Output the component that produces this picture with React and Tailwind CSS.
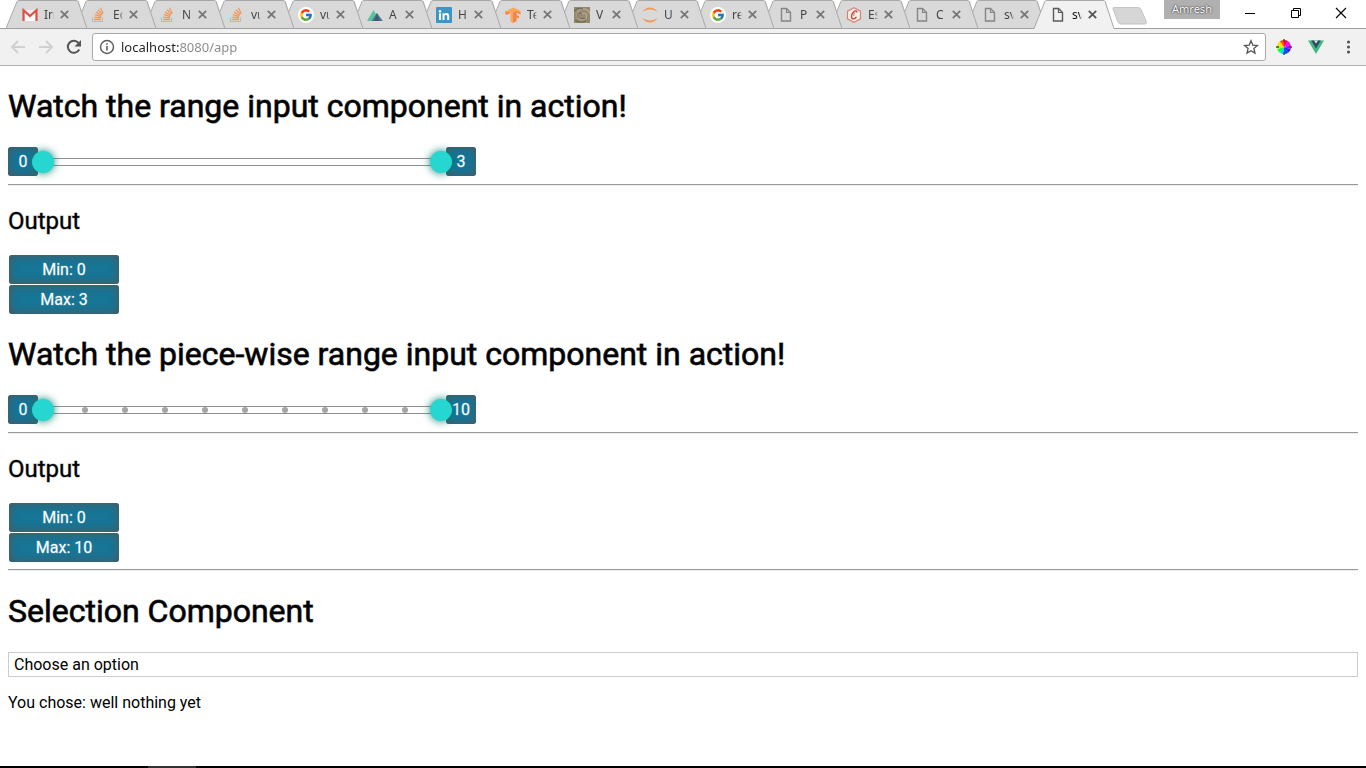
import { useState } from "react";
import { FcGoogle } from "react-icons/fc";

function GmailIcon() {
  return (
    <svg viewBox="0 0 16 16" className="size-4">
      <path d="M1 3h14v11H1z" fill="#ececec" />
      <path d="M3 4l5 4.500 5-4.500v10H3z" fill="#fafafa" />
      <path d="M1.500 14V3.200L8 9l6.500-5.800V14" fill="none" stroke="#db5348" strokeWidth="2.200" />
    </svg>
  );
}

function StackIcon() {
  return (
    <svg viewBox="0 0 16 16" className="size-4" fill="none">
      <path d="M1.500 10.500V14.500h10v-4" stroke="#b9bcbf" strokeWidth="1.200" />
      <path
        d="M3.200 12.500h6.700M3.300 10.200l6.700.7M3.800 7.700l6.500 1.800M5 5.100l5.700 3.200M7 2.700l4.500 4.700M9.500 1l2.700 5.500"
        stroke="#f0995a"
        strokeWidth="1.300"
      />
    </svg>
  );
}

function GoogleIcon() {
  return (
    <span className="flex size-4 items-center justify-center rounded-full bg-white">
      <FcGoogle size={14} />
    </span>
  );
}

function NuxtIcon() {
  return (
    <svg viewBox="0 0 16 16" className="size-4">
      <path d="M0 14L6.500 3 13 14z" fill="#5cc49c" />
      <path d="M4.500 14L10 6l5.800 8z" fill="#4a7a8a" />
      <path d="M7 14l3-8 2.500 8z" fill="#46587a" />
    </svg>
  );
}

function LinkedinIcon() {
  return (
    <svg viewBox="0 0 16 16" className="size-4">
      <rect width="16" height="16" rx="1" fill="#3a96c8" />
      <circle cx="4" cy="4.200" r="1.300" fill="#fff" />
      <path d="M3 6.200h2V13H3zM6.500 6.200h2v1c1-1.700 4.700-1.600 4.700 1.600V13h-2V9.500c0-2.100-2.700-2-2.700 0V13h-2z" fill="#fff" />
    </svg>
  );
}

function TensorIcon() {
  return (
    <svg viewBox="0 0 16 16" className="size-4">
      <path d="M0 4.500L8.500.5l7 3.200v3.500l-4-2v2.500l2.500 1.500v2.300l-2.500-1V14L8 16l-2.500-1.500V6L1 8z" fill="#fba75a" />
      <path d="M8 5.500l3.500-1.500 4 1.500v2l-4-2v3l2.500 1v1.800l-2.500-1V14L8 16z" fill="#f58350" />
      <path d="M0 4.500L5.500 6 1 8z" fill="#f58350" />
    </svg>
  );
}

function SwirlIcon() {
  return (
    <svg viewBox="0 0 16 16" className="size-4" fill="none">
      <rect width="16" height="16" fill="#94896f" />
      <path d="M8 8c0-3 5-2.500 4.500 1.500S5 14 3.500 10 5 2 9 2s6 2 7 5" stroke="#b5a893" strokeWidth="1.500" />
      <path d="M8 8c-1-3-5-2-4.500.5S8 12.500 11 11M0 4c3-3 6-3 9-2M1 13c3 3 9 3 13 0" stroke="#6c6f4e" strokeWidth="1.200" />
      <path d="M6 8c1-2 4-1 3 1s-4 2-5-1 2-5 5-5M11 16l4-5" stroke="#b08a86" strokeWidth="1" />
    </svg>
  );
}

function JupyterIcon() {
  return (
    <svg viewBox="0 0 16 16" className="size-4" fill="#f39a58">
      <path d="M.5 5C3.500-1 12.500-1 15.500 5 11.500 1.700 4.500 1.700.5 5zM.5 11C3.500 17 12.500 17 15.500 11 11.500 14.300 4.500 14.300.5 11z" />
    </svg>
  );
}

function HexIcon() {
  return (
    <svg viewBox="0 0 16 16" className="size-4" fill="none">
      <path d="M8 .7l6.500 3.500v7.600L8 15.300 1.500 11.800V4.200z" fill="#f8eee2" stroke="#d4847c" strokeWidth="1.200" />
      <path d="M10.800 5.500c.6-2-2-2-3.500-.3C5 7.500 4.800 11.500 7 11.800c1.500.1 2.700-.8 3.500-2" stroke="#b9473f" strokeWidth="1.300" />
      <path d="M8.700 5.500c-.8 1-1 2.500-.8 3.500" stroke="#b9473f" strokeWidth=".8" />
    </svg>
  );
}

function PageIcon({ active }) {
  return (
    <svg viewBox="0 0 16 16" className={active ? "size-4 text-[#5a5a5a]" : "size-4 text-[#858585]"} fill="none" stroke="currentColor">
      <path d="M3.500 1.500h5l4 4v8.500h-9z" strokeWidth="1.400" />
      <path d="M8.500 1.500v4h4" strokeWidth="1.200" />
    </svg>
  );
}

const tabs = [
  { title: "In", Icon: GmailIcon },
  { title: "Ec", Icon: StackIcon },
  { title: "N", Icon: StackIcon },
  { title: "vu", Icon: StackIcon },
  { title: "vu", Icon: GoogleIcon },
  { title: "A", Icon: NuxtIcon },
  { title: "H", Icon: LinkedinIcon },
  { title: "Te", Icon: TensorIcon },
  { title: "V", Icon: SwirlIcon },
  { title: "U", Icon: JupyterIcon },
  { title: "re", Icon: GoogleIcon },
  { title: "P", Icon: PageIcon },
  { title: "Es", Icon: HexIcon },
  { title: "C", Icon: PageIcon },
  { title: "sv", Icon: PageIcon },
  { title: "sv", Icon: PageIcon, active: true },
];

function Tab({ title, Icon, active, order, wide }) {
  return (
    <div
      role="tab"
      aria-selected={Boolean(active)}
      className={`relative flex h-[29px] items-center pl-4 ${wide ? "w-[69px]" : "w-[68px]"}`}
      style={{ zIndex: order }}
    >
      <svg
        viewBox="0 0 81 29"
        preserveAspectRatio="none"
        className="absolute top-0 left-0 h-[29px] w-[calc(100%+12px)]"
      >
        <path d="M0 29L11 1.500Q11.500.5 13 .5H71Q72.500.5 73 1.500L81 28.500V29z" fill={active ? "#f1f1f1" : "#d9d9d9"} />
        <path d="M0 28.500L11 1.500Q11.500.5 13 .5H70Q71.500.5 72 1.500L81 28.500" fill="none" stroke="#a8a8a8" />
        {!active && <path d="M0 28.500H81" stroke="#a0a0a0" />}
      </svg>
      <span className="relative shrink-0">
        <Icon active={active} />
      </span>
      <span
        className={`relative ml-[6px] w-[10px] shrink-0 overflow-hidden text-xs whitespace-nowrap mask-r-from-70% ${active ? "text-[#111]" : "text-[#444]"}`}
      >
        {title}
      </span>
      <button aria-label={`Close ${title}`} className="relative ml-[6px] shrink-0">
        <svg viewBox="0 0 9 9" className="size-[9px]">
          <path d="M.8.8l7.400 7.400M8.200.8L.8 8.200" stroke={active ? "#555" : "#777"} strokeWidth="1.800" />
        </svg>
      </button>
    </div>
  );
}

function TabStrip() {
  return (
    <header className="flex h-[29px] bg-white bg-[linear-gradient(#a0a0a0,#a0a0a0)] bg-[length:100%_1px] bg-bottom bg-no-repeat pl-[6px]">
      <div role="tablist" className="isolate flex min-w-0 flex-1">
        {tabs.map((tab, i) => (
          <Tab key={i} {...tab} wide={i < 8} order={tab.active ? 50 : 30 - i} />
        ))}
      </div>
      <div className="flex w-[262px] shrink-0 items-start pl-[8px]">
        <button aria-label="New tab" className="mt-[7px]">
          <svg viewBox="0 0 35 18" className="h-[18px] w-[35px]">
            <path d="M2 .5h24q2 0 3 2L34.500 15q0 2-1.500 2H9q-2 0-3-2L1 2Q.5.5 2 .5z" fill="#d6d6d6" stroke="#c4c4c4" />
          </svg>
        </button>
        <span className="ml-[17px] h-[19px] w-14 bg-[#b0b0b0] text-center text-[11px] leading-[18px] text-white [text-shadow:0_0_2px_#333,0_0_1px_#333]">
          Amresh
        </span>
        <div className="flex flex-1 items-center justify-between pt-[7px] pr-[19px] pl-6">
          <button aria-label="Minimize">
            <svg viewBox="0 0 12 12" className="size-3">
              <path d="M1 6.500h10" stroke="#000" />
            </svg>
          </button>
          <button aria-label="Restore">
            <svg viewBox="0 0 12 12" className="size-3" fill="none" stroke="#000">
              <path d="M1.500 3.500h7v7h-7zM3.500 3.500v-2h7v7h-2" />
            </svg>
          </button>
          <button aria-label="Close window">
            <svg viewBox="0 0 12 12" className="size-3">
              <path d="M1 1l10 10M11 1L1 11" stroke="#000" strokeWidth="1.100" />
            </svg>
          </button>
        </div>
      </div>
    </header>
  );
}

const wheel = ["#f05", "#f0f", "#b0f", "#22f", "#04f", "#0df", "#0f4", "#bf0", "#fd0", "#f50"];

function wedge(i) {
  const a = ((i * 36 - 90) * Math.PI) / 180;
  const b = (((i + 1) * 36 - 90) * Math.PI) / 180;
  return `M8 8L${8 + 7 * Math.cos(a)} ${8 + 7 * Math.sin(a)}A7 7 0 0 1 ${8 + 7 * Math.cos(b)} ${8 + 7 * Math.sin(b)}z`;
}

function Toolbar() {
  const [url, setUrl] = useState("localhost:8080/app");
  return (
    <nav className="flex h-[37px] items-center border-b border-[#b0b0b0] bg-[#f1f1f1] pr-[10px] pl-[10px]">
      <button aria-label="Back">
        <svg viewBox="0 0 16 16" className="size-4" fill="none" stroke="#cfcfcf" strokeWidth="1.800">
          <path d="M15 8H2.500M8 2L2 8l6 6" />
        </svg>
      </button>
      <button aria-label="Forward" className="ml-3">
        <svg viewBox="0 0 16 16" className="size-4" fill="none" stroke="#cfcfcf" strokeWidth="1.800">
          <path d="M1 8h12.500M8 2l6 6-6 6" />
        </svg>
      </button>
      <button aria-label="Reload" className="ml-3">
        <svg viewBox="0 0 16 16" className="size-4">
          <path d="M13.200 10.500A6 6 0 1 1 12.500 4" fill="none" stroke="#555" strokeWidth="2" />
          <path d="M15 1v6.500H8.500z" fill="#555" />
        </svg>
      </button>
      <div className="ml-[10px] flex h-7 min-w-0 flex-1 items-center rounded-[3px] border border-[#a9a9a9] bg-white pr-[6px] pl-[6px]">
        <svg viewBox="0 0 16 16" className="size-4 shrink-0" fill="none" stroke="#5a5a5a">
          <circle cx="8" cy="8" r="6.500" strokeWidth="1.400" />
          <path d="M8 7v4.500M8 4.200v1.600" strokeWidth="1.600" />
        </svg>
        <input
          aria-label="Address"
          value={url}
          onChange={(e) => setUrl(e.target.value)}
          className="ml-[6px] min-w-0 flex-1 bg-[linear-gradient(90deg,#222_58px,#888_58px)] bg-clip-text text-[13px] leading-5 text-transparent outline-none"
        />
        <button aria-label="Bookmark this page">
          <svg viewBox="0 0 16 16" className="size-4" fill="none" stroke="#555" strokeWidth="1.300">
            <path d="M8 1.800l1.800 4.300 4.600.4-3.500 3 1.100 4.600L8 11.700l-4 2.400 1.100-4.600-3.500-3 4.600-.4z" />
          </svg>
        </button>
      </div>
      <button aria-label="Color picker" className="ml-[10px]">
        <svg viewBox="0 0 16 16" className="size-4">
          {wheel.map((c, i) => (
            <path key={c} d={wedge(i)} fill={c} />
          ))}
          <path d="M8 0v3M8 13V16M0 8h3M13 8H16" stroke="#444" strokeWidth="1.400" />
        </svg>
      </button>
      <button aria-label="Vue devtools" className="ml-4">
        <svg viewBox="0 0 16 16" className="size-4">
          <path d="M0 1.500h16L8 15z" fill="#41b883" />
          <path d="M3.200 1.500h9.600L8 9.500z" fill="#34495e" />
          <path d="M6 1.500h4L8 4.500z" fill="#f1f1f1" />
        </svg>
      </button>
      <button aria-label="Menu" className="ml-4">
        <svg viewBox="0 0 16 16" className="size-4" fill="#555">
          <circle cx="8.500" cy="3" r="1.600" />
          <circle cx="8.500" cy="8" r="1.600" />
          <circle cx="8.500" cy="13" r="1.600" />
        </svg>
      </button>
    </nav>
  );
}

function Title({ children }) {
  return (
    <h1 className="mt-[21px] mb-[22px] text-[32px] leading-[38px] font-normal [-webkit-text-stroke:1px_#000a]">
      {children}
    </h1>
  );
}

function Rule({ tight }) {
  return (
    <hr className={`border-t border-b border-t-[#999] border-b-[#eee] ${tight ? "mt-[7px]" : "mt-2"}`} />
  );
}

function EndLabel({ children }) {
  return (
    <output className="h-[29px] w-[30px] shrink-0 rounded-[3px] bg-[#137599] text-center leading-[29px] text-white shadow-[inset_0_0_10px_#555] [-webkit-text-stroke:1px_#fff4]">
      {children}
    </output>
  );
}

function Thumb({ label, max, value, onChange }) {
  return (
    <input
      type="range"
      aria-label={label}
      min={0}
      max={max}
      value={value}
      onChange={(e) => onChange(Number(e.target.value))}
      className="pointer-events-none absolute inset-y-0 -right-[6px] -left-[6px] m-0 appearance-none bg-transparent outline-none [&::-webkit-slider-thumb]:pointer-events-auto [&::-webkit-slider-thumb]:size-[22px] [&::-webkit-slider-thumb]:appearance-none [&::-webkit-slider-thumb]:rounded-full [&::-webkit-slider-thumb]:bg-[#26d6d0] [&::-webkit-slider-thumb]:shadow-[0_0_8px_#0a8070]"
    />
  );
}

function RangeSlider({ name, max, range, setRange, stepped }) {
  const [low, high] = range;
  return (
    <div className="flex w-[468px] max-w-full items-center">
      <EndLabel>{low}</EndLabel>
      <div className="relative flex h-[29px] flex-1 items-center">
        <div className="flex h-2 flex-1 items-center justify-between border-y border-[#909090] pr-[38px] pl-11">
          {stepped &&
            Array.from({ length: max - 1 }, (_, i) => (
              <span key={i} className="size-[6px] rounded-full bg-[#a5a5a5]" />
            ))}
        </div>
        <Thumb label={`${name} minimum`} max={max} value={low} onChange={(v) => setRange([Math.min(v, high), high])} />
        <Thumb label={`${name} maximum`} max={max} value={high} onChange={(v) => setRange([low, Math.max(v, low)])} />
      </div>
      <EndLabel>{high}</EndLabel>
    </div>
  );
}

function Output({ range }) {
  return (
    <section>
      <h2 className="mt-[21px] mb-5 text-2xl leading-7 font-normal [-webkit-text-stroke:1px_#0006]">Output</h2>
      <div className="ml-px flex w-[110px] flex-col gap-px text-center leading-[29px] text-white [-webkit-text-stroke:1px_#fff4]">
        <output className="rounded-[3px] bg-[#177595] shadow-[inset_0_0_10px_#555]">Min: {range[0]}</output>
        <output className="rounded-[3px] bg-[#177595] shadow-[inset_0_0_10px_#555]">Max: {range[1]}</output>
      </div>
    </section>
  );
}

export default function App() {
  const [range, setRange] = useState([0, 3]);
  const [pieces, setPieces] = useState([0, 10]);
  const [choice, setChoice] = useState("");
  return (
    <div className="flex min-h-screen flex-col bg-white font-['Noto_Sans',sans-serif]">
      <TabStrip />
      <Toolbar />
      <main className="flow-root flex-1 px-2 font-[Roboto,sans-serif] text-base text-black">
        <Title>Watch the range input component in action!</Title>
        <RangeSlider name="Range" max={3} range={range} setRange={setRange} />
        <Rule />
        <Output range={range} />
        <Title>Watch the piece-wise range input component in action!</Title>
        <RangeSlider name="Piece-wise range" max={10} range={pieces} setRange={setPieces} stepped />
        <Rule />
        <Output range={pieces} />
        <Rule tight />
        <Title>Selection Component</Title>
        <select
          aria-label="Choose an option"
          value={choice}
          onChange={(e) => setChoice(e.target.value)}
          className="block h-[25px] w-full appearance-none border border-[#ccc] bg-white px-[5px] outline-none"
        >
          <option value="">Choose an option</option>
          <option value="one">one</option>
          <option value="two">two</option>
        </select>
        <p className="mt-4 leading-5">You chose: {choice || "well nothing yet"}</p>
      </main>
      <footer className="flex h-[2px] bg-black pl-[148px]">
        <span className="w-12 bg-[#333]" />
      </footer>
    </div>
  );
}
